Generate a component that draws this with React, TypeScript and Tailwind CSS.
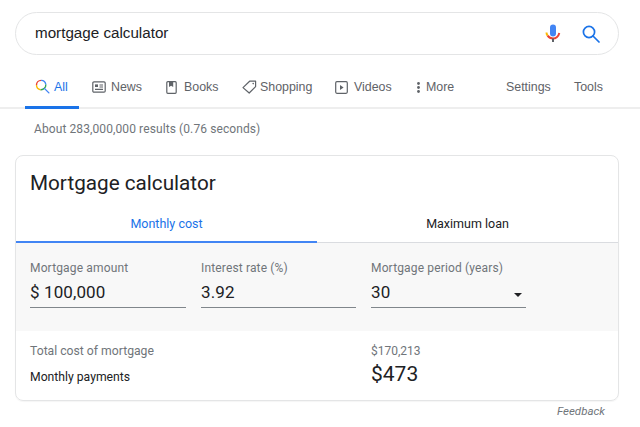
import React from "react";

const Mic = () => (
  <svg width="16" height="20" viewBox="0 0 16 20" fill="none">
    <rect x="5" y="0.5" width="6" height="12" rx="3" fill="#4285f4" />
    <path d="M1.5 8.5 C1.5 9.5 1.8 10.5 2.6 11.6" stroke="#fbbc05" strokeWidth="2" />
    <path d="M2.6 11.6 C4 13.6 6 14.5 8 14.5 C10.5 14.5 13.5 12.6 14.3 9" stroke="#ea4335" strokeWidth="2" />
    <rect x="7" y="14.5" width="2" height="3.5" fill="#5f6368" />
  </svg>
);

const Glass = ({ size, color, sw = 1.7 }: { size: number; color: string; sw?: number }) => (
  <svg width={size} height={size} viewBox="0 0 18 18" fill="none" stroke={color} strokeWidth={sw}>
    <circle cx="7" cy="7" r="5.6" />
    <path d="M11 11 L17 17" strokeLinecap="round" />
  </svg>
);

const ColorGlass = () => (
  <svg width="15" height="15" viewBox="0 0 16 16" fill="none" strokeWidth="1.5">
    <path d="M1.6 6.5 A5 5 0 0 1 6.5 1.5" stroke="#ea4335" />
    <path d="M6.5 1.5 A5 5 0 0 1 11.5 6" stroke="#4285f4" />
    <path d="M1.6 6.5 A5 5 0 0 0 6 11.4" stroke="#fbbc05" />
    <path d="M6 11.4 A5 5 0 0 0 11.5 6" stroke="#34a853" />
    <path d="M10 10 L14.8 14.8" stroke="#4285f4" strokeLinecap="round" />
  </svg>
);

const News = () => (
  <svg width="14" height="12" viewBox="0 0 14 12" fill="none" stroke="#5f6368" strokeWidth="1.2">
    <rect x="0.8" y="0.8" width="12.4" height="10.4" rx="1.2" />
    <rect x="3" y="3.4" width="3" height="2.6" fill="#5f6368" stroke="none" />
    <path d="M7.5 4 H11 M7.5 6 H11 M3 8.4 H11" />
  </svg>
);

const Book = () => (
  <svg width="11" height="13" viewBox="0 0 11 13" fill="none">
    <rect x="0.8" y="0.7" width="9.4" height="11.6" rx="1" stroke="#5f6368" strokeWidth="1.2" />
    <path d="M3 0.7 H7.2 V6 L5.1 4.8 L3 6 Z" fill="#5f6368" />
  </svg>
);

const Tag = () => (
  <svg width="15" height="14" viewBox="0 0 15 14" fill="none" stroke="#5f6368" strokeWidth="1.2">
    <path d="M1 7.6 L7.6 1.2 H13.6 V6.6 L7.2 13 Z" strokeLinejoin="round" />
    <circle cx="11.2" cy="3.6" r="0.8" fill="#5f6368" stroke="none" />
  </svg>
);

const Play = () => (
  <svg width="13" height="13" viewBox="0 0 13 13" fill="none">
    <rect x="0.7" y="0.7" width="11.6" height="11.6" rx="1.2" stroke="#5f6368" strokeWidth="1.2" />
    <path d="M5 4 L8.6 6.5 L5 9 Z" fill="#5f6368" />
  </svg>
);

const Dots = () => (
  <svg width="3" height="11" viewBox="0 0 3 11" fill="#5f6368">
    <circle cx="1.5" cy="1.5" r="1.4" />
    <circle cx="1.5" cy="5.5" r="1.4" />
    <circle cx="1.5" cy="9.5" r="1.4" />
  </svg>
);

const Field = ({ label, value, w, caret }: { label: string; value: string; w: string; caret?: boolean }) => (
  <div className={`${w} flex flex-col`}>
    <div className="text-[12px] leading-[16px] tracking-[0.15px] text-[#70757a]">{label}</div>
    <div className="mt-[5px] h-[27px] flex items-center justify-between border-b border-[#80868b] text-[17px] leading-[24px] tracking-[0.1px] text-[#202124]">
      <span className="-mt-[5px]">{value}</span>
      {caret && <span className="mr-[4px] mt-[2px] w-0 h-0 border-x-[4px] border-x-transparent border-t-[4px] border-t-[#202124]" />}
    </div>
  </div>
);

export default function App() {
  return (
    <div className="w-[640px] h-[427px] overflow-hidden bg-white font-['Roboto',sans-serif] flex flex-col">
      <div className="pt-[12px] pl-[15px] pr-[21px]">
        <div className="h-[43px] rounded-full border border-[#e4e5e6] flex items-center pl-[19px] pr-[18px] font-['Liberation_Sans',sans-serif]">
          <span className="flex-1 text-[15.2px] text-[#202124]">mortgage calculator</span>
          <span className="mr-[21px] flex"><Mic /></span>
          <Glass size={18} color="#1a73e8" />
        </div>
      </div>

      <div className="mt-[17px] h-[37px] border-b-2 border-[#eeeeee] flex text-[12.4px] text-[#5f6368] font-['Liberation_Sans',sans-serif]">
        <div className="ml-[25px] w-[54px] h-[37px] border-b-[3px] border-[#1a73e8] flex gap-[4px] pt-[7px] pl-[10px] items-start text-[#1a73e8]">
          <ColorGlass />
          <span className="leading-[16px]">All</span>
        </div>
        <div className="ml-[13px] w-[49px] flex gap-[5px] pt-[7px] items-start"><span className="h-[16px] flex items-center"><News /></span><span className="leading-[16px]">News</span></div>
        <div className="ml-[25px] w-[52px] flex gap-[7px] pt-[7px] items-start"><span className="h-[16px] flex items-center"><Book /></span><span className="leading-[16px]">Books</span></div>
        <div className="ml-[24px] w-[70px] flex gap-[3px] pt-[7px] items-start"><span className="h-[16px] flex items-center"><Tag /></span><span className="leading-[16px]">Shopping</span></div>
        <div className="ml-[23px] w-[57px] flex gap-[6px] pt-[7px] items-start"><span className="h-[16px] flex items-center"><Play /></span><span className="leading-[16px]">Videos</span></div>
        <div className="ml-[25px] w-[38px] flex gap-[6px] pt-[7px] items-start"><span className="h-[16px] flex items-center"><Dots /></span><span className="leading-[16px]">More</span></div>
        <div className="ml-[51px] w-[45px] pt-[7px] leading-[16px]">Settings</div>
        <div className="ml-[23px] pt-[7px] leading-[16px]">Tools</div>
      </div>

      <div className="mt-[11px] pl-[34px] text-[12px] leading-[18px] tracking-[0.1px] text-[#70757a]">About 283,000,000 results (0.76 seconds)</div>

      <div className="mt-[17px] ml-[15px] w-[604px] h-[246px] rounded-[8px] border border-[#e4e5e6] shadow-[0_1px_1px_rgba(0,0,0,0.04)] overflow-hidden flex flex-col">
        <div className="h-[51px] pl-[14px] pt-[13px] text-[20.7px] leading-[28px] text-[#202124]">Mortgage calculator</div>
        <div className="flex h-[36px] text-[12.5px]">
          <div className="w-[301px] border-b-[2px] border-[#4285f4] text-center text-[#1a73e8] pt-[9px] leading-[16px]">Monthly cost</div>
          <div className="flex-1 border-b border-[#dadce0] text-center text-[#202124] pt-[9px] leading-[16px]">Maximum loan</div>
        </div>
        <div className="h-[88px] bg-[#f8f8f8] pl-[14px] pt-[17px] flex gap-[15px]">
          <Field label="Mortgage amount" value="$ 100,000" w="w-[156px]" />
          <Field label="Interest rate (%)" value="3.92" w="w-[155px]" />
          <Field label="Mortgage period (years)" value="30" w="w-[155px]" caret />
        </div>
        <div className="pl-[14px] pt-[12px] grid grid-cols-[341px_1fr] text-[12.2px]">
          <div className="h-[16px] leading-[16px] text-[#70757a]">Total cost of mortgage</div>
          <div className="h-[16px] leading-[16px] text-[12px] text-[#70757a]">$170,213</div>
          <div className="mt-[10px] leading-[16px] text-[#202124]">Monthly payments</div>
          <div className="text-[21px] leading-[30px] text-[#202124]">$473</div>
        </div>
      </div>

      <div className="mt-[2px] pr-[35px] text-right text-[11.5px] leading-[16px] italic text-[#70757a]">Feedback</div>
    </div>
  );
}
